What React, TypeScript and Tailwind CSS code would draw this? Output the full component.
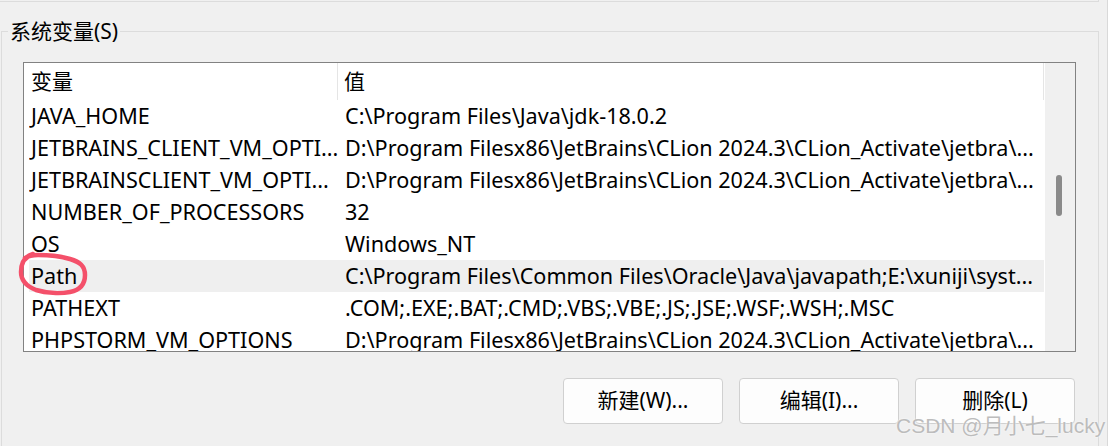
import React from "react"

const rows = [
  ["JAVA_HOME", "C:\\Program Files\\Java\\jdk-18.0.2"],
  ["JETBRAINS_CLIENT_VM_OPTI...", "D:\\Program Filesx86\\JetBrains\\CLion 2024.3\\CLion_Activate\\jetbra\\..."],
  ["JETBRAINSCLIENT_VM_OPTI...", "D:\\Program Filesx86\\JetBrains\\CLion 2024.3\\CLion_Activate\\jetbra\\..."],
  ["NUMBER_OF_PROCESSORS", "32"],
  ["OS", "Windows_NT"],
  ["Path", "C:\\Program Files\\Common Files\\Oracle\\Java\\javapath;E:\\xuniji\\syst..."],
  ["PATHEXT", ".COM;.EXE;.BAT;.CMD;.VBS;.VBE;.JS;.JSE;.WSF;.WSH;.MSC"],
  ["PHPSTORM_VM_OPTIONS", "D:\\Program Filesx86\\JetBrains\\CLion 2024.3\\CLion_Activate\\jetbra\\..."],
]

export default function App() {
  return (
    <div className="relative w-[1108px] h-[446px] overflow-hidden bg-[#f0f0f0] border-r border-[#d9d9d9] text-[21px] text-black font-['Noto_Sans','Noto_Sans_CJK_SC',sans-serif]">
      {/* previous group's bottom edge */}
      <div className="w-[1099px] h-[2px] border-b border-r border-[#dcdcdc]" />

      <fieldset className="ml-[1px] mt-[15px] w-[1098px] h-[460px] border border-[#dcdcdc]">
        <legend className="ml-[6px] px-[2px] leading-[28px]">系统变量(S)</legend>

        <div className="pl-[21px] pr-[22px]">
          {/* list view */}
          <div className="mt-[17px] h-[290px] border border-[#828282] bg-white flex text-[21.6px]">
            <div className="flex-1 flex flex-col overflow-hidden">
              <div className="h-[37px] shrink-0 flex items-center">
                <div className="w-[314px] pl-[7px] h-full flex items-center border-r border-[#e5e5e5] text-[21px]">变量</div>
                <div className="flex-1 pl-[6px] h-full flex items-center border-r border-[#e5e5e5] text-[21px]">值</div>
              </div>
              <div className="shrink-0 flex flex-col">
                {rows.map(([name, value]) => (
                  <div
                    key={name}
                    className={`ml-[5px] h-[32px] shrink-0 flex items-center whitespace-nowrap ${name === "Path" ? "bg-[#efefef]" : ""}`}
                  >
                    <div className="w-[309px] pl-[2px] overflow-hidden">{name}</div>
                    <div className="flex-1 pl-[7px] overflow-hidden">{value}</div>
                  </div>
                ))}
              </div>
            </div>
            {/* scrollbar */}
            <div className="w-[30px] ml-[1px] bg-[#f0f0f0] pl-[11px] pt-[112px]">
              <div className="w-[6px] h-[41px] rounded-full bg-[#8a8a8a]" />
            </div>
          </div>

          <div className="mt-[26px] flex justify-end gap-4 pr-[1px]">
            {["新建(W)...", "编辑(I)...", "删除(L)"].map((label) => (
              <button
                key={label}
                className="w-[160px] h-[46px] rounded-[4px] border border-[#d0d0d0] bg-[#fdfdfd] flex items-center justify-center"
              >
                {label}
              </button>
            ))}
          </div>
        </div>
      </fieldset>

      {/* hand-drawn mark around Path */}
      <svg
        className="absolute left-[15px] top-[249px] w-[76px] h-[50px]"
        viewBox="15 249 76 50"
        fill="none"
      >
        <path
          d="M33 254 C26 256 21 262 21 272 C21 280 26 286 36 290 C46 293 60 294 70 292 C80 290 85 284 85 275 C85 266 80 262 70 259 C60 256 48 255 38 255 C32 255 28 256 25 258"
          stroke="#f4506a"
          strokeWidth="4.5"
          strokeLinecap="round"
        />
      </svg>

      {/* watermark */}
      <div className="absolute left-[896px] top-[412px] text-[21px] leading-[28px] text-[#bcbcbc] font-['Liberation_Sans','Noto_Sans_CJK_SC',sans-serif] [text-shadow:0_0_2px_#ffffff]">
        CSDN @月小七_lucky
      </div>
    </div>
  )
}
